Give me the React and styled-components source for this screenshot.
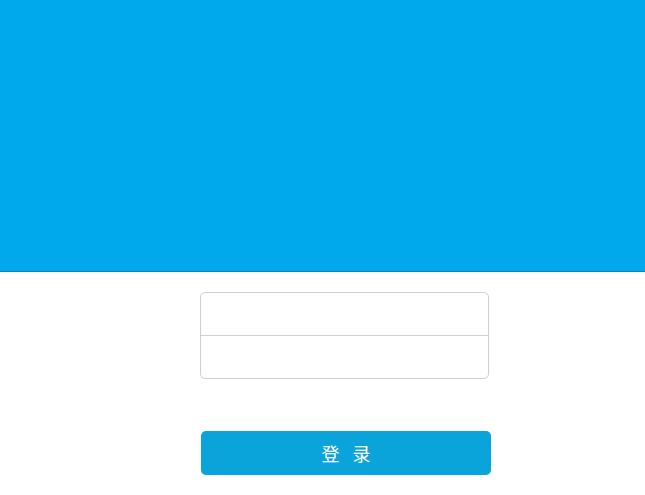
import React from 'react';
import styled, { createGlobalStyle } from 'styled-components';

const GlobalStyle = createGlobalStyle`
  body {
    margin: 0;
    background: #ffffff;
    font-family: "Noto Sans CJK SC", "Noto Sans", sans-serif;
  }
`

const Header = styled.div`
  height: 271px;
  background-color: #00a9eb;
  border-bottom: 1px solid #0b86b8;
`

const Main = styled.div`
  padding: 20px 0 0 200px;
`

const Fields = styled.div`
  width: 287px;
  border: 1px solid #cfcfd2;
  border-radius: 5px;
  background: #ffffff;
  overflow: hidden;
`

const Field = styled.input`
  display: block;
  box-sizing: border-box;
  width: 100%;
  height: ${p => p.h}px;
  border: none;
  border-top: ${p => (p.first ? 'none' : '1px solid #cfcfd2')};
  outline: none;
  padding: 0 10px;
  font-size: 14px;
  background: transparent;
`

const LoginButton = styled.button`
  display: block;
  width: 290px;
  height: 44px;
  margin: 52px 0 0 1px;
  border: none;
  border-radius: 5px;
  background-color: #0aa4db;
  color: #ffffff;
  font-family: "Noto Sans CJK SC", sans-serif;
  font-size: 18px;
  letter-spacing: 13px;
  text-indent: 13px;
  cursor: pointer;
`

export default function App() {
  return (
    <>
      <GlobalStyle />
      <Header />
      <Main>
        <Fields>
          <Field first h={42} type="text" />
          <Field h={43} type="password" />
        </Fields>
        <LoginButton>登录</LoginButton>
      </Main>
    </>
  );
}
